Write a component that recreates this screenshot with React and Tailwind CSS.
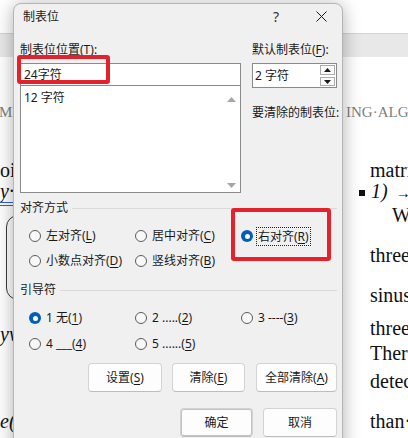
import React from "react";

function U({ children }) {
  return <span className="underline decoration-1 underline-offset-[2px]">{children}</span>;
}

function Radio({ checked, focus, children }) {
  return (
    <div className="flex items-center h-[20px]">
      {checked ? (
        <span className="w-[12px] h-[12px] rounded-full bg-[#005fb8] flex items-center justify-center shrink-0">
          <span className="w-[5px] h-[5px] rounded-full bg-white" />
        </span>
      ) : (
        <span className="w-[12px] h-[12px] rounded-full border border-[#5c5c5c] bg-[#f8f8f8] shrink-0" />
      )}
      <span
        className={
          focus
            ? "ml-[4px] px-[1px] leading-[17px] outline outline-1 outline-dotted outline-[#222]"
            : "ml-[5px]"
        }
      >
        {children}
      </span>
    </div>
  );
}

function Heading({ children, className }) {
  return (
    <div className={"flex items-center h-[16px] " + className}>
      <span>{children}</span>
      <div className="ml-[4px] flex-1 h-px bg-[#d9d9d9]" />
    </div>
  );
}

function Btn({ children, className }) {
  return (
    <div
      className={
        "h-[29px] rounded-[4px] bg-[#fdfdfd] border border-[#d3d3d3] border-b-[#bdbdbd] flex items-center justify-center " +
        className
      }
    >
      {children}
    </div>
  );
}

function Tri({ down, color }) {
  return (
    <svg width="9" height="5" viewBox="0 0 9 5">
      {down ? (
        <path d="M0 0 L9 0 L4.5 5 Z" fill={color} />
      ) : (
        <path d="M0 5 L9 5 L4.5 0 Z" fill={color} />
      )}
    </svg>
  );
}

function SmallTri({ down }) {
  return (
    <svg width="7" height="4" viewBox="0 0 7 4">
      {down ? <path d="M0 0 L7 0 L3.5 4 Z" fill="#1a1a1a" /> : <path d="M0 4 L7 4 L3.5 0 Z" fill="#1a1a1a" />}
    </svg>
  );
}

function LeftStrip() {
  return (
    <div className="w-[13px] shrink-0 flex flex-col font-['Liberation_Serif',serif] text-[20px] leading-[20px] text-[#111] whitespace-nowrap">
      <div className="h-[33px]" />
      <div className="h-[24px] bg-[#e8e8e8] border-t border-[#d4d4d4]" />
      <div className="mt-[48px] h-[15px] text-[15px] leading-[15px] text-[#808080] -ml-[1px]">ME</div>
      <div className="mt-[40px] h-[20px]">oi</div>
      <div className="mt-[1px] h-[20px] italic">y·</div>
      <div className="mt-[1px] h-[4px] border-y border-[#2f62d6]" />
      <div className="mt-[9px] ml-[6px] w-[80px] h-[85px] border border-[#3a3a3a] rounded-[12px]" />
      <div className="mt-[24px] h-[20px] italic">yv</div>
      <div className="mt-[67px] h-[20px] italic">e(</div>
    </div>
  );
}

function RightStrip() {
  return (
    <div className="flex-1 min-w-0 flex flex-col font-['Liberation_Serif',serif] text-[20px] leading-[20px] text-[#111] whitespace-nowrap">
      <div className="h-[33px]" />
      <div className="h-[24px] bg-[#e8e8e8] border-t border-[#d4d4d4]" />
      <div className="mt-[48px] h-[15px] text-[15px] leading-[15px] text-[#808080] pl-[3px]">ING·ALG</div>
      <div className="mt-[40px] h-[20px] pl-[27px]">matri</div>
      <div className="mt-[1px] h-[20px] pl-[16px]">
        <span className="inline-block w-[6px] h-[6px] bg-[#111] mr-[6px] align-[2px]" />
        <span className="italic">1)</span>
        <span className="ml-[8px] text-[15px]">→</span>
      </div>
      <div className="mt-[4px] h-[20px] pl-[49px]">W</div>
      <div className="mt-[20px] h-[20px] pl-[27px]">three</div>
      <div className="mt-[20px] h-[20px] pl-[27px]">sinus</div>
      <div className="mt-[13px] h-[20px] pl-[27px]">three</div>
      <div className="mt-[5px] h-[20px] pl-[27px]">There</div>
      <div className="mt-[8px] h-[20px] pl-[27px]">detec</div>
      <div className="mt-[20px] h-[20px] pl-[27px]">than·</div>
    </div>
  );
}

function Dialog() {
  return (
    <div className="relative z-10 w-[330px] h-[470px] shrink-0 self-start mt-[3px] bg-[#f0f0f0] border border-[#b5b5b5] rounded-t-[8px] shadow-[0_2px_18px_rgba(0,0,0,0.32)] font-['Noto_Sans','Noto_Sans_CJK_SC',sans-serif] text-[12px] leading-[16px] text-[#1a1a1a]">
      {/* title bar */}
      <div className="h-[25px] flex items-center pl-[9px] pr-[11px]">
        <span>制表位</span>
        <div className="ml-auto w-[20px] flex justify-center text-[14px] text-[#333]">?</div>
        <div className="ml-[25px] w-[20px] flex justify-center">
          <svg width="11" height="11" viewBox="0 0 11 11">
            <path d="M0.5 0.5 L10.5 10.5 M10.5 0.5 L0.5 10.5" stroke="#1a1a1a" strokeWidth="1" />
          </svg>
        </div>
      </div>

      <div className="pl-[6px] pr-[5px] pt-[13px]">
        <div className="flex">
          <div className="w-[221px]">
            <div className="h-[16px]">
              制表位位置(<U>T</U>):
            </div>
            <div className="mt-[5px] h-[23px] bg-white border border-[#8a8a8a] pl-[3px] flex items-center">24字符</div>
            <div className="h-[107px] bg-white border-x border-b border-[#8a8a8a] flex">
              <div className="flex-1 pl-[3px] pt-[4px]">12 字符</div>
              <div className="w-[17px] flex flex-col items-center justify-between pt-[11px] pb-[4px]">
                <Tri color="#a6a6a6" />
                <Tri down color="#a6a6a6" />
              </div>
            </div>
          </div>
          <div className="ml-[11px] w-[85px]">
            <div className="h-[16px] whitespace-nowrap">
              默认制表位(<U>F</U>):
            </div>
            <div className="mt-[5px] h-[25px] bg-white border border-[#8a8a8a] flex items-center pl-[2px]">
              <span>2 字符</span>
              <div className="ml-auto mr-[1px] flex flex-col gap-[2px]">
                <div className="w-[15px] h-[10px] border border-[#ababab] bg-[#fafafa] flex items-center justify-center">
                  <SmallTri />
                </div>
                <div className="w-[15px] h-[9px] border border-[#ababab] bg-[#fafafa] flex items-center justify-center">
                  <SmallTri down />
                </div>
              </div>
            </div>
            <div className="mt-[17px] h-[16px] whitespace-nowrap">要清除的制表位:</div>
          </div>
        </div>

        <Heading className="mt-[7px]">对齐方式</Heading>
        <div className="mt-[10px] pl-[9px] grid grid-cols-[106px_106px_1fr] gap-y-[5px]">
          <Radio>
            左对齐(<U>L</U>)
          </Radio>
          <Radio>
            居中对齐(<U>C</U>)
          </Radio>
          <Radio checked focus>
            右对齐(<U>R</U>)
          </Radio>
          <Radio>
            小数点对齐(<U>D</U>)
          </Radio>
          <Radio>
            竖线对齐(<U>B</U>)
          </Radio>
        </div>

        <Heading className="mt-[11px]">引导符</Heading>
        <div className="mt-[10px] pl-[9px] grid grid-cols-[106px_106px_1fr] gap-y-[6px]">
          <Radio checked>
            1 无(<U>1</U>)
          </Radio>
          <Radio>
            2 .....(<U>2</U>)
          </Radio>
          <Radio>
            3 ----(<U>3</U>)
          </Radio>
          <Radio>
            4 ___(<U>4</U>)
          </Radio>
          <Radio>
            5 ......(<U>5</U>)
          </Radio>
        </div>

        <div className="mt-[9px] flex justify-end">
          <Btn className="w-[74px]">
            设置(<U>S</U>)
          </Btn>
          <Btn className="ml-[10px] w-[73px]">
            清除(<U>E</U>)
          </Btn>
          <Btn className="ml-[11px] w-[81px]">
            全部清除(<U>A</U>)
          </Btn>
        </div>

        <div className="mt-[16px] flex justify-end">
          <Btn className="w-[73px] border-[#0067c0] border-b-[#0067c0] shadow-[inset_0_0_0_1px_rgba(0,103,192,0.35)]">确定</Btn>
          <Btn className="ml-[10px] w-[74px]">取消</Btn>
        </div>
      </div>

      {/* annotation boxes */}
      <div className="absolute left-[3px] top-[51px] w-[93px] h-[29px] border-[4px] border-[#e5212b] rounded-[3px]" />
      <div className="absolute left-[217px] top-[204px] w-[100px] h-[53px] border-[4px] border-[#e5212b] rounded-[3px]" />
    </div>
  );
}

export default function App() {
  return (
    <div className="w-[408px] h-[438px] overflow-hidden bg-white flex">
      <LeftStrip />
      <Dialog />
      <RightStrip />
    </div>
  );
}
